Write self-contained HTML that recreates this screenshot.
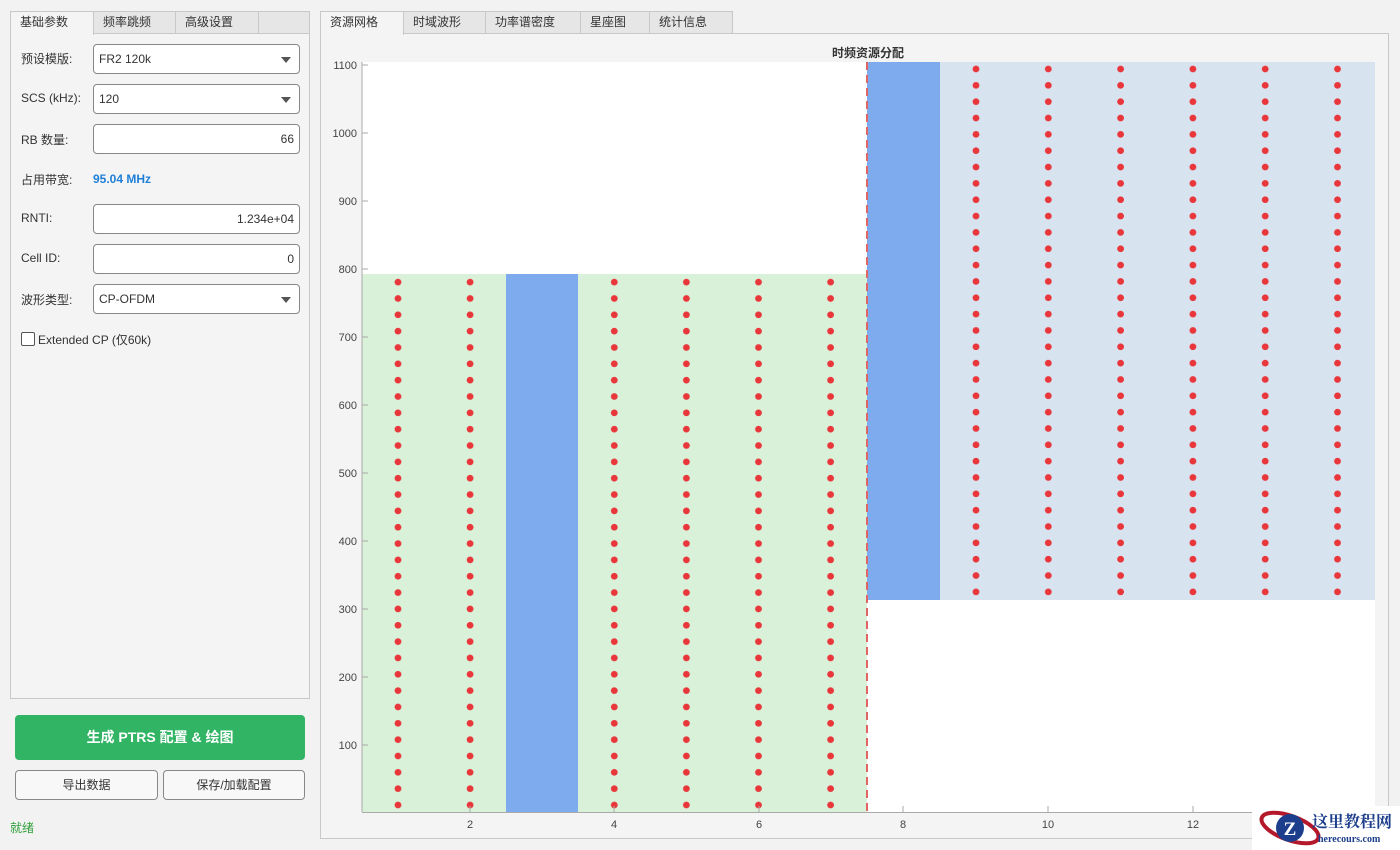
<!DOCTYPE html>
<html><head><meta charset="utf-8"><style>
*{box-sizing:border-box;margin:0;padding:0}
body{width:1400px;height:850px;background:#f2f2f2;font-family:"Liberation Sans","Noto Sans CJK SC",sans-serif;font-size:12px;color:#333;position:relative;overflow:hidden}
.abs{position:absolute}
.panel{border:1px solid #c8c8c8;background:#f4f4f4}
.tab{position:absolute;top:11px;height:23px;border:1px solid #c8c8c8;background:#e6e6e6;font-size:12px;line-height:21px;text-align:left;padding-left:9px;color:#333}
.tab.on{background:#f4f4f4;border-bottom:none;height:24px}
.lbl{position:absolute;left:21px;font-size:12px;color:#333}
.inp{position:absolute;left:93px;width:207px;height:30px;border:1px solid #888;border-radius:4px;background:#fff;font-size:12px;line-height:28px;padding:0 5px}
.dd::after{content:"";position:absolute;right:8px;top:12px;border-left:5px solid transparent;border-right:5px solid transparent;border-top:6px solid #555}
.btn{position:absolute;height:30px;border:1px solid #888;border-radius:4px;background:#f8f8f8;text-align:center;line-height:28px;font-size:12px}
</style></head><body>
<div class="abs panel" style="left:10px;top:33px;width:300px;height:666px"></div>
<div class="tab on" style="left:10px;width:84px">基础参数</div>
<div class="tab" style="left:93px;width:83px">频率跳频</div>
<div class="tab" style="left:175px;width:84px">高级设置</div>
<div class="tab" style="left:258px;width:52px"></div>
<div class="lbl" style="top:50px">预设模版:</div>
<div class="inp dd" style="top:44px">FR2 120k</div>
<div class="lbl" style="top:91px">SCS (kHz):</div>
<div class="inp dd" style="top:84px">120</div>
<div class="lbl" style="top:131px">RB 数量:</div>
<div class="inp" style="top:124px;text-align:right">66</div>
<div class="lbl" style="top:171px">占用带宽:</div>
<div class="abs" style="left:93px;top:172px;color:#1f7fd8;font-weight:bold;font-size:12px">95.04 MHz</div>
<div class="lbl" style="top:211px">RNTI:</div>
<div class="inp" style="top:204px;text-align:right">1.234e+04</div>
<div class="lbl" style="top:251px">Cell ID:</div>
<div class="inp" style="top:244px;text-align:right">0</div>
<div class="lbl" style="top:291px">波形类型:</div>
<div class="inp dd" style="top:284px">CP-OFDM</div>
<div class="abs" style="left:21px;top:332px;width:14px;height:14px;border:1px solid #555;background:#fff;border-radius:2px"></div>
<div class="abs" style="left:38px;top:331px">Extended CP (仅60k)</div>
<div class="abs" style="left:15px;top:715px;width:290px;height:45px;background:#31b463;border-radius:4px;color:#fff;font-weight:bold;font-size:14px;text-align:center;line-height:45px">生成 PTRS 配置 &amp; 绘图</div>
<div class="btn" style="left:15px;top:770px;width:143px">导出数据</div>
<div class="btn" style="left:163px;top:770px;width:142px">保存/加载配置</div>
<div class="abs" style="left:10px;top:819px;color:#2e9e3a">就绪</div>

<div class="abs panel" style="left:320px;top:33px;width:1069px;height:806px"></div>
<div class="tab on" style="left:320px;width:84px">资源网格</div>
<div class="tab" style="left:403px;width:83px">时域波形</div>
<div class="tab" style="left:485px;width:96px">功率谱密度</div>
<div class="tab" style="left:580px;width:70px">星座图</div>
<div class="tab" style="left:649px;width:84px">统计信息</div>

<svg class="abs" style="left:0;top:0" width="1400" height="850">
<defs>
<pattern id="pl" patternUnits="userSpaceOnUse" x="362" y="12.51" width="72.1" height="16.34"><circle cx="36" cy="8.17" r="3.4" fill="#e8363a"/></pattern>
<pattern id="pr" patternUnits="userSpaceOnUse" x="940" y="60.83" width="72.3" height="16.34"><circle cx="36" cy="8.17" r="3.4" fill="#e8363a"/></pattern>
</defs>
<rect x="362" y="62" width="1013" height="750" fill="#fff"/>
<rect x="362" y="274" width="505" height="538" fill="#d9f0d9"/>
<rect x="362" y="274" width="505" height="538" fill="url(#pl)"/>
<rect x="506" y="274" width="72" height="538" fill="#7eabee"/>
<rect x="867" y="62" width="508" height="538" fill="#d8e3f0"/>
<rect x="940" y="62" width="435" height="538" fill="url(#pr)"/>
<rect x="867" y="62" width="73" height="538" fill="#7eabee"/>
<line x1="867" y1="62" x2="867" y2="812" stroke="#e06666" stroke-width="2" stroke-dasharray="8,5"/>
<line x1="362" y1="62" x2="362" y2="812" stroke="#aaa"/>
<line x1="362" y1="812.5" x2="1375" y2="812.5" stroke="#aaa"/>
<text x="868" y="57" font-size="12" font-weight="bold" text-anchor="middle" fill="#333" font-family="Liberation Sans,Noto Sans CJK SC,sans-serif">时频资源分配</text>
<g font-size="11" fill="#444" text-anchor="end" font-family="Liberation Sans,sans-serif">
<text x="357" y="69">1100</text><text x="357" y="137">1000</text><text x="357" y="205">900</text><text x="357" y="273">800</text><text x="357" y="341">700</text><text x="357" y="409">600</text><text x="357" y="477">500</text><text x="357" y="545">400</text><text x="357" y="613">300</text><text x="357" y="681">200</text><text x="357" y="749">100</text>
</g>
<g stroke="#aaa"><line x1="362" y1="65" x2="368" y2="65"/><line x1="362" y1="133" x2="368" y2="133"/><line x1="362" y1="201" x2="368" y2="201"/><line x1="362" y1="269" x2="368" y2="269"/><line x1="362" y1="337" x2="368" y2="337"/><line x1="362" y1="405" x2="368" y2="405"/><line x1="362" y1="473" x2="368" y2="473"/><line x1="362" y1="541" x2="368" y2="541"/><line x1="362" y1="609" x2="368" y2="609"/><line x1="362" y1="677" x2="368" y2="677"/><line x1="362" y1="745" x2="368" y2="745"/>
<line x1="470" y1="806" x2="470" y2="812"/><line x1="614" y1="806" x2="614" y2="812"/><line x1="759" y1="806" x2="759" y2="812"/><line x1="903" y1="806" x2="903" y2="812"/><line x1="1048" y1="806" x2="1048" y2="812"/><line x1="1193" y1="806" x2="1193" y2="812"/><line x1="1338" y1="806" x2="1338" y2="812"/></g>
<g font-size="11" fill="#444" text-anchor="middle" font-family="Liberation Sans,sans-serif">
<text x="470" y="828">2</text><text x="614" y="828">4</text><text x="759" y="828">6</text><text x="903" y="828">8</text><text x="1048" y="828">10</text><text x="1193" y="828">12</text>
</g>
<rect x="1252" y="806" width="148" height="44" fill="#fff"/>
<ellipse cx="1290" cy="828" rx="30" ry="12" fill="none" stroke="#b3182b" stroke-width="4" transform="rotate(20 1290 828)"/>
<circle cx="1290" cy="828" r="14" fill="#1d3e8c"/>
<text x="1290" y="835" font-size="19" font-weight="bold" fill="#fff" text-anchor="middle" font-family="Liberation Serif,serif">Z</text>
<text x="1312" y="827" font-size="16" font-weight="bold" fill="#1d3e8c" font-family="Liberation Serif,Noto Serif CJK SC,serif">这里教程网</text>
<text x="1318" y="842" font-size="10" font-weight="bold" fill="#1d3e8c" font-family="Liberation Serif,serif">herecours.com</text>
</svg>
</body></html>
